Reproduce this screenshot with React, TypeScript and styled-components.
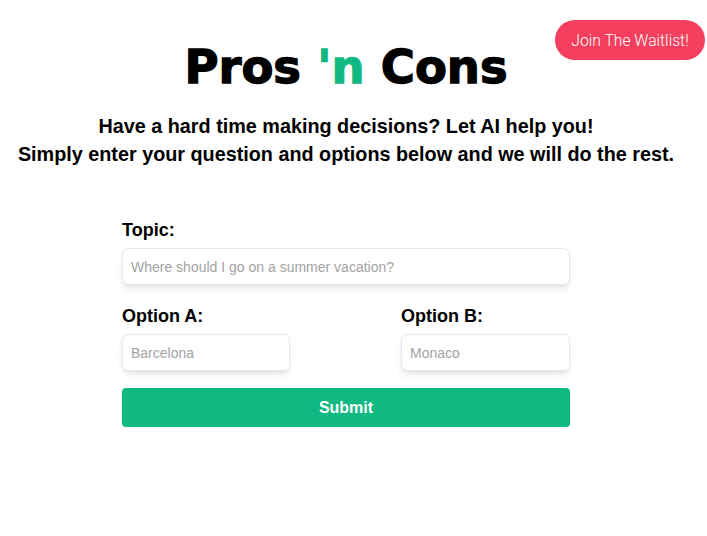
import React from "react";
import styled, { createGlobalStyle } from "styled-components";

const Global = createGlobalStyle`
  html, body { margin: 0; padding: 0; background: #fff; }
  body { font-family: "Liberation Sans", Arial, sans-serif; color: #000; }
  * { box-sizing: border-box; }
`;

const Page = styled.div`
  position: relative;
  width: 707px;
  min-height: 536px;
  padding-right: 15px;
`;

const WaitlistButton = styled.button`
  position: absolute;
  top: 20px;
  right: 2px;
  width: 150px;
  height: 40px;
  border: none;
  border-radius: 20px;
  background: #f43f5e;
  color: #fff;
  font-family: Roboto, "Liberation Sans", sans-serif;
  font-weight: 300;
  font-size: 15.7px;
  padding: 0;
  cursor: pointer;
`;

const Header = styled.header`
  display: flex;
  flex-direction: column;
  align-items: center;
  padding-top: 38px;
`;

const Title = styled.h1`
  margin: 0;
  font-family: "DejaVu Sans", "Liberation Sans", sans-serif;
  font-weight: 900;
  font-size: 46.5px;
  line-height: 58px;
  -webkit-text-stroke: 1.3px currentColor;
`;

const Accent = styled.span`
  color: #10b981;
`;

const Subtitle = styled.p`
  margin: 16px 0 0;
  font-weight: 700;
  font-size: 19.8px;
  line-height: 28px;
  text-align: center;
`;

const Form = styled.form`
  width: 448px;
  margin: 52px auto 0;
  display: flex;
  flex-direction: column;
`;

const Field = styled.div<{ $width?: string }>`
  display: flex;
  flex-direction: column;
  width: ${(p) => p.$width ?? "100%"};
`;

const Label = styled.label`
  font-weight: 700;
  font-size: 18px;
  line-height: 20px;
  margin-bottom: 8px;
`;

const Input = styled.input`
  height: 37px;
  width: 100%;
  border: 1px solid #e8e8e8;
  border-radius: 6px;
  background: #fff;
  padding: 0 8px;
  font-family: "Liberation Sans", Arial, sans-serif;
  font-size: 14px;
  color: #333;
  box-shadow: 0 5px 8px -2px rgba(0, 0, 0, 0.1), 0 2px 4px -2px rgba(0, 0, 0, 0.08);
  outline: none;
  &::placeholder { color: #a3a3a3; }
`;

const Row = styled.div`
  display: flex;
  justify-content: space-between;
  margin-top: 21px;
`;

const Submit = styled.button`
  margin-top: 17px;
  height: 39px;
  width: 100%;
  border: none;
  border-radius: 4px;
  background: #10b981;
  color: #fff;
  font-family: "Liberation Sans", Arial, sans-serif;
  font-weight: 700;
  font-size: 16px;
  cursor: pointer;
`;

export default function App() {
  return (
    <>
      <Global />
      <Page>
        <WaitlistButton type="button">Join The Waitlist!</WaitlistButton>
        <Header>
          <Title>
            Pros <Accent>'n</Accent> Cons
          </Title>
          <Subtitle>
            Have a hard time making decisions? Let AI help you!
            <br />
            Simply enter your question and options below and we will do the rest.
          </Subtitle>
        </Header>
        <Form onSubmit={(e) => e.preventDefault()}>
          <Field>
            <Label>Topic:</Label>
            <Input placeholder="Where should I go on a summer vacation?" />
          </Field>
          <Row>
            <Field $width="168px">
              <Label>Option A:</Label>
              <Input placeholder="Barcelona" />
            </Field>
            <Field $width="169px">
              <Label>Option B:</Label>
              <Input placeholder="Monaco" />
            </Field>
          </Row>
          <Submit type="submit">Submit</Submit>
        </Form>
      </Page>
    </>
  );
}
